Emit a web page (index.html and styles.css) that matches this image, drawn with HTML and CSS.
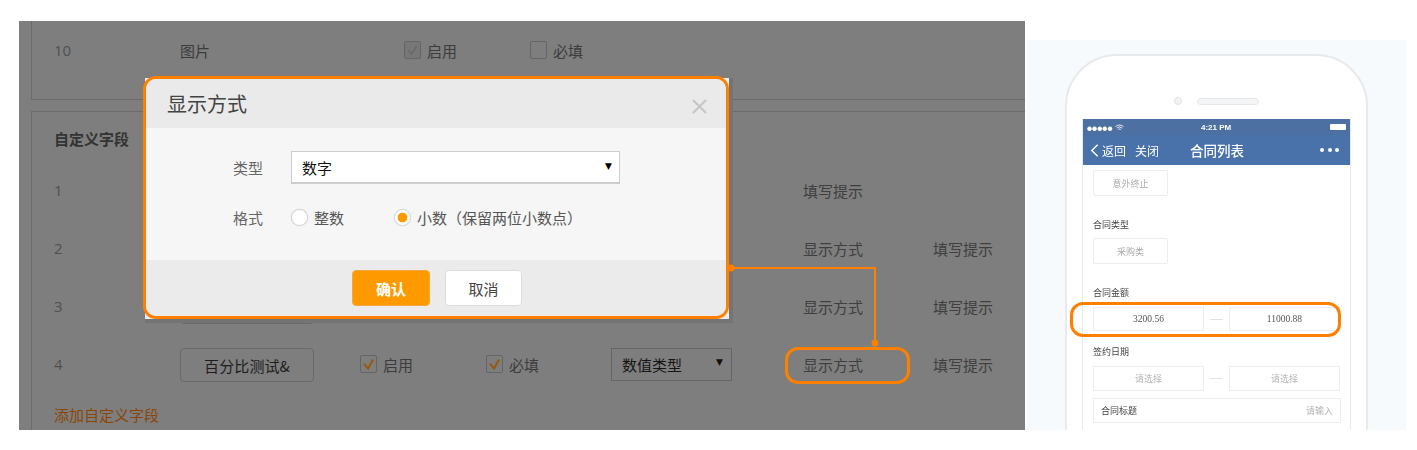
FILE: index.html
```html
<!DOCTYPE html>
<html lang="zh">
<head>
<meta charset="utf-8">
<title>显示方式</title>
<link rel="stylesheet" href="styles.css">
</head>
<body>
<main class="page">
  <section class="admin">
    <div class="card card-top">
      <div class="row-top">
        <span class="num">10</span>
        <span>图片</span>
        <label class="check"><i class="box box-off"><svg viewBox="0 0 18 18"><path d="M4 9l4 5 6-10"/></svg></i>启用</label>
        <label class="check"><i class="box"></i>必填</label>
      </div>
    </div>
    <div class="card card-custom">
      <h2 class="card-title">自定义字段</h2>
      <div class="row">
        <span class="num">1</span><span class="name-btn">文本测试</span>
        <label class="check"><i class="box box-on"><svg viewBox="0 0 18 18"><path d="M3.5 8.5l5 6 6-11"/></svg></i>启用</label>
        <label class="check"><i class="box box-on"><svg viewBox="0 0 18 18"><path d="M3.5 8.5l5 6 6-11"/></svg></i>必填</label>
        <span class="type-select">文本类型<b class="caret">▼</b></span>
        <span class="link">填写提示</span><span></span>
      </div>
      <div class="row">
        <span class="num">2</span><span class="name-btn">数字测试</span>
        <label class="check"><i class="box box-on"><svg viewBox="0 0 18 18"><path d="M3.5 8.5l5 6 6-11"/></svg></i>启用</label>
        <label class="check"><i class="box box-on"><svg viewBox="0 0 18 18"><path d="M3.5 8.5l5 6 6-11"/></svg></i>必填</label>
        <span class="type-select">数值类型<b class="caret">▼</b></span>
        <span class="link">显示方式</span><span class="link">填写提示</span>
      </div>
      <div class="row">
        <span class="num">3</span><span class="name-btn">金额测试</span>
        <label class="check"><i class="box box-on"><svg viewBox="0 0 18 18"><path d="M3.5 8.5l5 6 6-11"/></svg></i>启用</label>
        <label class="check"><i class="box box-on"><svg viewBox="0 0 18 18"><path d="M3.5 8.5l5 6 6-11"/></svg></i>必填</label>
        <span class="type-select">数值类型<b class="caret">▼</b></span>
        <span class="link">显示方式</span><span class="link">填写提示</span>
      </div>
      <div class="row">
        <span class="num">4</span><span class="name-btn">百分比测试&amp;</span>
        <label class="check"><i class="box box-on"><svg viewBox="0 0 18 18"><path d="M3.5 8.5l5 6 6-11"/></svg></i>启用</label>
        <label class="check"><i class="box box-on"><svg viewBox="0 0 18 18"><path d="M3.5 8.5l5 6 6-11"/></svg></i>必填</label>
        <span class="type-select">数值类型<b class="caret">▼</b></span>
        <span class="link">显示方式</span><span class="link">填写提示</span>
      </div>
      <a class="add-field">添加自定义字段</a>
    </div>

    <div class="modal">
      <div class="modal-frame">
        <header class="modal-head">
          <h1 class="modal-title">显示方式</h1>
          <svg class="modal-close" viewBox="0 0 16 16"><path d="M1 1l14 14M15 1L1 15"/></svg>
        </header>
        <div class="modal-body">
          <div class="form-row">
            <span class="form-label">类型</span>
            <span class="form-select">数字<b class="caret caret-dark">▼</b></span>
          </div>
          <div class="form-row form-row-radio">
            <span class="form-label">格式</span>
            <label class="radio radio-first"><i class="dot"></i>整数</label>
            <label class="radio"><i class="dot dot-on"></i>小数（保留两位小数点）</label>
          </div>
        </div>
        <footer class="modal-foot">
          <button class="btn btn-ok">确认</button>
          <button class="btn btn-cancel">取消</button>
        </footer>
      </div>
    </div>

    <div class="callout-box"></div>
    <svg class="connector" viewBox="0 0 160 84">
      <path d="M3 3H147V78"/>
      <circle cx="3" cy="3" r="3.5"/>
      <circle cx="147" cy="78" r="3.5"/>
    </svg>
  </section>

  <section class="preview">
    <div class="phone">
      <div class="phone-top"><i class="camera"></i><i class="speaker"></i></div>
      <div class="screen">
        <div class="app-bar">
          <div class="status">
            <span class="signal">●●●●●
              <svg class="wifi" viewBox="0 0 10 8"><path d="M.5 3a6.5 6.5 0 0 1 9 0M2 4.7a4.3 4.3 0 0 1 6 0M3.6 6.3a2 2 0 0 1 2.8 0"/></svg>
            </span>
            <span class="clock">4:21 PM</span>
            <span class="battery"></span>
          </div>
          <div class="nav">
            <svg class="chev" viewBox="0 0 10 16"><path d="M8.5 1.5L2 8l6.5 6.5"/></svg>
            <span class="nav-back">返回</span>
            <span class="nav-close">关闭</span>
            <span class="nav-title">合同列表</span>
            <span class="nav-more"><i></i><i></i><i></i></span>
          </div>
        </div>
        <div class="screen-body">
          <div class="tag tag-first">意外终止</div>
          <div class="lbl lbl-type">合同类型</div>
          <div class="tag tag-second">采购类</div>
          <div class="lbl lbl-amount">合同金额</div>
          <div class="range range-amount">
            <span class="field field-val">3200.56</span><i class="dash"></i><span class="field field-val">11000.88</span>
          </div>
          <div class="lbl lbl-date">签约日期</div>
          <div class="range range-date">
            <span class="field">请选择</span><i class="dash"></i><span class="field">请选择</span>
          </div>
          <div class="input-row"><span>合同标题</span><span class="hint">请输入</span></div>
        </div>
      </div>
    </div>
    <div class="amount-ring"></div>
  </section>
</main>
</body>
</html>
```

FILE: styles.css
```css
* { box-sizing: border-box; }
html, body { margin: 0; padding: 0; background: #fff; }
body {
  font-family: "Noto Sans CJK SC", "Noto Sans", sans-serif;
  font-size: 15px;
  color: #3c3c3c;
  overflow: hidden;
  height: 450px;
}
i { display: block; font-style: normal; }
h1, h2 { margin: 0; font-weight: 400; }

.page {
  display: flex;
  align-items: flex-start;
  gap: 2px;
  padding: 21px 0 0 19px;
}

/* dimmed admin page */
.admin {
  position: relative;
  flex: none;
  width: 1006px;
  height: 409px;
  padding-left: 12px;
  background: #7e7e7e;
  overflow: hidden;
}
.card {
  margin-right: -10px;
  border: 1px solid #6b6b6b;
  padding-left: 22px;
}
.card-top {
  height: 80px;
  margin-top: -1px;
  padding-top: 1px;
  border-top: 0;
}
.row-top {
  display: grid;
  grid-template-columns: 126px 224px 126px 1fr;
  align-items: center;
  height: 58px;
}
.card-custom {
  margin-top: 11px;
  height: 330px;
  padding-top: 16px;
}
.card-title {
  font-size: 15px;
  font-weight: 700;
  line-height: 22px;
  margin-bottom: 11px;
  color: #333;
}
.row {
  display: grid;
  grid-template-columns: 126px 180px 126px 125px 192px 130px 1fr;
  align-items: center;
  height: 58px;
}
.num { color: #505050; font-family: "Open Sans", sans-serif; font-size: 15px; }
.name-btn {
  display: flex;
  align-items: center;
  justify-content: center;
  width: 134px;
  height: 34px;
  margin-top: 2px;
  border: 1px solid #696969;
  border-radius: 4px;
  color: #1d1d1d;
  letter-spacing: .1px;
}
.check { display: flex; align-items: center; gap: 6px; }
.box {
  width: 17px;
  height: 18px;
  border: 1px solid #656565;
  border-radius: 2px;
}
.box svg { display: block; width: 15px; height: 16px; fill: none; }
.box-on svg path { stroke: #96590e; stroke-width: 2.4; }
.box-off { background: #777; }
.box-off svg path { stroke: #676767; stroke-width: 1.4; }
.type-select {
  position: relative;
  display: flex;
  align-items: center;
  width: 121px;
  height: 33px;
  padding-left: 10px;
  border: 1px solid #656565;
  color: #151515;
}
.caret {
  position: absolute;
  right: 8px;
  top: 7px;
  font-size: 9px;
  font-weight: 400;
  line-height: 12px;
  color: #111;
  font-family: "DejaVu Sans", sans-serif;
}
.link { color: #3f3f3f; }
.add-field {
  display: block;
  margin-top: 11px;
  line-height: 22px;
  color: #8a4608;
}

/* modal */
.modal {
  position: absolute;
  left: 126px;
  top: 57px;
  width: 584px;
  height: 241px;
  background: #ececec;
  box-shadow: 0 4px 0 #747474, 4px 0 0 #747474, 4px 4px 0 #747474;
}
.modal-frame {
  position: absolute;
  left: -2px;
  top: -2px;
  right: 0;
  bottom: 0;
  display: flex;
  flex-direction: column;
  border: 3px solid #ff8000;
  border-radius: 13px;
  overflow: hidden;
  background: #ebebeb;
}
.modal-head {
  display: flex;
  align-items: center;
  justify-content: space-between;
  flex: none;
  height: 49px;
  padding: 0 19px 0 21px;
  background: #eaeaea;
}
.modal-title { font-size: 20px; line-height: 49px; color: #444; }
.modal-close { width: 15px; height: 15px; margin-top: 5px; fill: none; stroke: #c6c6c6; stroke-width: 2.2; }
.modal-body {
  flex: none;
  height: 132px;
  padding: 23px 0 0 87px;
  background: #f6f6f6;
}
.form-row { display: flex; align-items: center; height: 33px; color: #333; }
.form-row-radio { height: 20px; margin-top: 23px; color: #555; }
.form-label { width: 58px; color: #666; flex: none; }
.form-select {
  position: relative;
  display: flex;
  align-items: center;
  width: 329px;
  height: 33px;
  padding-left: 10px;
  background: #fff;
  border: 1px solid #cdcdcd;
  border-bottom-width: 2px;
  color: #111;
}
.caret-dark { right: 7px; top: 8px; color: #000; }
.radio { display: flex; align-items: center; gap: 6px; }
.radio-first { width: 103px; }
.dot {
  width: 17px;
  height: 17px;
  border-radius: 50%;
  background: #fff;
  border: 1px solid #d6d6d6;
  box-shadow: 0 0 1px #ccc;
}
.dot-on { background: radial-gradient(circle, #ff9900 0 4.5px, #fff 5.2px); }
.modal-foot {
  display: flex;
  flex: 1;
  gap: 15px;
  padding: 10px 0 0 206px;
  background: #ebebeb;
}
.btn {
  width: 78px;
  height: 36px;
  padding: 0;
  border-radius: 4px;
  font: inherit;
}
.btn-ok { background: #ff9900; border: 1px solid #f7a83a; color: #fff; font-weight: 700; }
.btn-cancel { width: 77px; background: #fff; border: 1px solid #dcdcdc; color: #444; }

/* annotations */
.callout-box {
  position: absolute;
  left: 766px;
  top: 326px;
  width: 125px;
  height: 37px;
  border: 3px solid #ff8000;
  border-radius: 13px;
}
.connector {
  position: absolute;
  left: 709px;
  top: 244px;
  width: 160px;
  height: 84px;
  overflow: visible;
  fill: #ff8000;
}
.connector path { fill: none; stroke: #ff8000; stroke-width: 2; }

/* phone preview */
.preview {
  position: relative;
  flex: none;
  width: 379px;
  height: 390px;
  margin-top: 19px;
  padding: 14px 0 0 38px;
  background: #f7fafc;
  overflow: hidden;
}
.phone {
  width: 303px;
  height: 420px;
  padding: 0 16px;
  background: #fff;
  border: 2px solid #e7e9ec;
  border-radius: 52px 52px 0 0;
  filter: blur(.35px);
}
.phone-top {
  display: flex;
  align-items: center;
  gap: 15px;
  height: 63px;
  padding: 27px 0 0 91px;
}
.camera { width: 8px; height: 8px; border-radius: 50%; background: #f3f3f3; border: 1px solid #e2e2e2; }
.speaker { width: 62px; height: 7px; border-radius: 4px; background: #f3f4f5; border: 1px solid #e8e8e8; }
.screen {
  height: 360px;
  border-left: 1px solid #e8eaee;
  border-right: 1px solid #e8eaee;
  margin: 0 -1px;
}
.app-bar { height: 46px; margin: 0 -0px; background: #4a72aa; color: #fff; }
.status {
  position: relative;
  display: flex;
  align-items: center;
  justify-content: space-between;
  height: 16px;
  padding: 0 4px;
  background: #4d70a2;
  font-size: 7px;
}
.signal { display: flex; align-items: center; gap: 2px; font-size: 5px; letter-spacing: .1px; }
.wifi { width: 9px; height: 7px; fill: none; stroke: #fff; stroke-width: 1; }
.clock {
  position: absolute;
  left: 118px;
  font-family: "Liberation Sans", sans-serif;
  font-size: 8px;
  font-weight: 700;
}
.battery { width: 16px; height: 6px; border-radius: 1px; background: #fff; }
.nav {
  position: relative;
  display: flex;
  align-items: center;
  height: 30px;
  padding-left: 7px;
  font-size: 12px;
}
.chev { width: 9px; height: 15px; fill: none; stroke: #fff; stroke-width: 1.6; }
.nav-back { margin-left: 3px; }
.nav-close { margin-left: 9px; }
.nav-title { margin-left: 31px; font-size: 13.5px; font-weight: 500; }
.nav-more { display: flex; gap: 3.5px; margin-left: auto; margin-right: 11px; }
.nav-more i { width: 4px; height: 4px; border-radius: 50%; background: #fff; }
.screen-body { padding: 5px 10px 0 10px; font-size: 9px; color: #333; }
.tag {
  display: flex;
  align-items: center;
  justify-content: center;
  width: 75px;
  height: 26px;
  border: 1px solid #ebedf0;
  border-radius: 2px;
  color: #aaa;
}
.lbl { line-height: 14px; color: #444; }
.lbl-type { margin-top: 22px; }
.tag-second { margin-top: 6px; }
.lbl-amount { margin-top: 22px; }
.range { display: flex; align-items: center; margin-top: 7px; }
.lbl-date { margin-top: 14px; }
.range-amount { height: 24px; }
.range-date { height: 25px; }
.field {
  display: flex;
  align-items: center;
  justify-content: center;
  width: 112px;
  height: 100%;
  border: 1px solid #ebedf0;
  color: #b4b4b4;
}
.field-val { font-family: "Liberation Serif", serif; color: #555; font-size: 9.5px; }
.dash { width: 13px; height: 1px; margin: 0 6px 0 6px; background: #dfe1e4; }
.input-row {
  display: flex;
  align-items: center;
  justify-content: space-between;
  width: 248px;
  height: 25px;
  margin-top: 7px;
  padding: 0 7px;
  border: 1px solid #ebedf0;
  color: #444;
}
.hint { color: #b4b4b4; }
.amount-ring {
  position: absolute;
  left: 43px;
  top: 262px;
  width: 271px;
  height: 35px;
  border: 3px solid #ff8000;
  border-radius: 13px;
}
```
